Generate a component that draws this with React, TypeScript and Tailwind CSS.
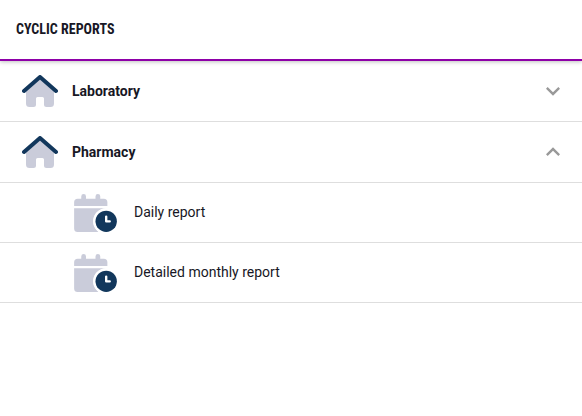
import { useState } from "react";

function HouseIcon() {
  return (
    <svg viewBox="0 0 576 512" className="h-8 w-9 shrink-0" aria-hidden="true">
      <path
        fill="#caccda"
        d="M64 260 288 60 512 260V456a56 56 0 0 1-56 56H392a40 40 0 0 1-40-40V376a24 24 0 0 0-24-24H248a24 24 0 0 0-24 24V472a40 40 0 0 1-40 40H120a56 56 0 0 1-56-56Z"
      />
      <path
        fill="none"
        stroke="#12375c"
        strokeWidth="64"
        strokeLinecap="round"
        strokeLinejoin="round"
        d="M32 256 288 32 544 256"
      />
    </svg>
  );
}

function CalendarClockIcon() {
  return (
    <svg viewBox="0 0 576 512" className="h-[38px] w-[43px] shrink-0" aria-hidden="true">
      <g fill="#caccda">
        <path d="M0 160V112a48 48 0 0 1 48-48H96V32a32 32 0 0 1 64 0V64H288V32a32 32 0 0 1 64 0V64h48a48 48 0 0 1 48 48v48Z" />
        <path d="M0 192H448v1A176 176 0 0 0 331 512H48a48 48 0 0 1-48-48Z" />
      </g>
      <circle cx="432" cy="368" r="176" fill="#fff" />
      <circle cx="432" cy="368" r="144" fill="#12375c" />
      <path
        d="M432 304v64h48"
        fill="none"
        stroke="#fff"
        strokeWidth="32"
        strokeLinecap="round"
        strokeLinejoin="round"
      />
    </svg>
  );
}

function Chevron({ up }: { up: boolean }) {
  return (
    <svg viewBox="0 0 24 24" className="size-7 shrink-0" fill="#999999" aria-hidden="true">
      {up ? (
        <path d="M12 8l-6 6 1.41 1.41L12 10.83l4.59 4.58L18 14z" />
      ) : (
        <path d="M16.59 8.59L12 13.17 7.41 8.59 6 10l6 6 6-6z" />
      )}
    </svg>
  );
}

const sections = [
  { name: "Laboratory", reports: [] as string[] },
  { name: "Pharmacy", reports: ["Daily report", "Detailed monthly report"] },
];

export default function App() {
  const [open, setOpen] = useState<string | null>("Pharmacy");

  return (
    <div className="min-h-screen bg-white font-['Roboto',sans-serif] text-sm text-[#171725]">
      <header className="flex h-[61px] items-center border-b-2 border-[#8e00a8] px-4 pb-px shadow-[0_1px_4px_rgba(0,0,0,0.25)]">
        <h1 className="font-['Roboto_Condensed','Roboto',sans-serif] text-sm font-bold uppercase">
          Cyclic reports
        </h1>
      </header>
      <main>
        {sections.map((section) => {
          const expanded = open === section.name;
          return (
            <section key={section.name}>
              <h2>
                <button
                  type="button"
                  aria-expanded={expanded}
                  onClick={() => setOpen(expanded ? null : section.name)}
                  className="flex h-[61px] w-full items-center border-b border-[#dedede] pr-[15px] pl-[22px] text-left"
                >
                  <HouseIcon />
                  <span className="ml-3.5 grow font-bold">{section.name}</span>
                  <Chevron up={expanded} />
                </button>
              </h2>
              {expanded && (
                <ul>
                  {section.reports.map((report) => (
                    <li key={report} className="border-b border-[#dedede]">
                      <a href="#" className="flex h-[59px] items-center pl-[74px]">
                        <CalendarClockIcon />
                        <span className="ml-[17px] pb-px">{report}</span>
                      </a>
                    </li>
                  ))}
                </ul>
              )}
            </section>
          );
        })}
      </main>
    </div>
  );
}
